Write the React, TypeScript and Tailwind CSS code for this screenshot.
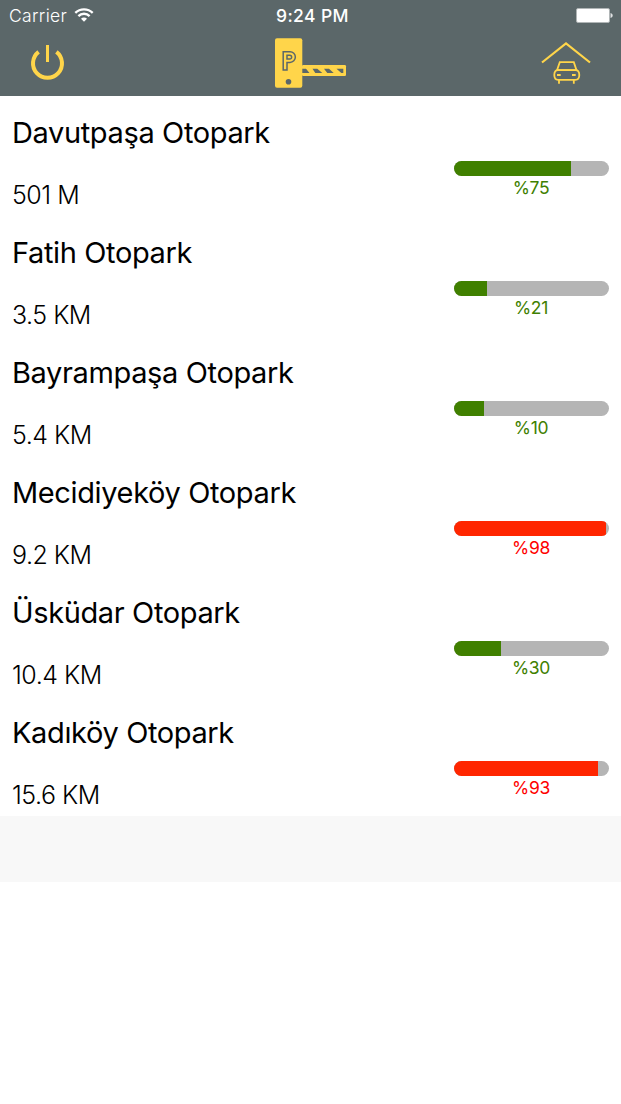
type Lot = { name: string; distance: string; percent: number; fill: number };

const lots: Lot[] = [
  { name: "Davutpaşa Otopark", distance: "501 M", percent: 75, fill: 117 },
  { name: "Fatih Otopark", distance: "3.5 KM", percent: 21, fill: 33 },
  { name: "Bayrampaşa Otopark", distance: "5.4 KM", percent: 10, fill: 30 },
  { name: "Mecidiyeköy Otopark", distance: "9.2 KM", percent: 98, fill: 152 },
  { name: "Üsküdar Otopark", distance: "10.4 KM", percent: 30, fill: 47 },
  { name: "Kadıköy Otopark", distance: "15.6 KM", percent: 93, fill: 144 },
];

function WifiIcon() {
  return (
    <svg className="-mt-[3px] ml-[7px] h-[14px] w-[20px]" viewBox="0 0 20 14" fill="none" stroke="#fff" strokeWidth="2.3">
      <path d="M1.3 4.9a12.3 12.3 0 0 1 17.4 0" />
      <path d="M4.4 8.1a7.9 7.9 0 0 1 11.2 0" />
      <path d="M7 10.7a4.2 4.2 0 0 1 6 0L10 13.7z" fill="#fff" stroke="none" />
    </svg>
  );
}

function BatteryIcon() {
  return (
    <svg className="-mt-[3px] h-[15px] w-[37px]" viewBox="0 0 37 15">
      <rect x="0.5" y="0.5" width="33" height="14" rx="1.5" fill="#fff" stroke="#b0b5b6" />
      <path d="M34.5 5c1.5.4 2.2 1.3 2.2 2.5s-.7 2.1-2.2 2.5z" fill="#dfe1e2" />
    </svg>
  );
}

function PowerIcon() {
  return (
    <svg className="h-9 w-[35px]" viewBox="0 0 35 36" fill="none" stroke="#ffd54a">
      <path d="M8.6 6.9A14.5 14.5 0 1 0 26.4 6.9" strokeWidth="4" />
      <path d="M17.5 0v17" strokeWidth="3" />
    </svg>
  );
}

function BarrierIcon() {
  return (
    <svg className="h-[50px] w-[72px]" viewBox="0 0 72 50">
      <rect x="0" y="0.3" width="27.3" height="49.5" rx="2" fill="#ffd54a" />
      <path
        d="M8.2 13.7H15a5.3 5.3 0 0 1 0 10.7H12V32H8.2zM12 17.3v3.7h2.8a1.8 1.8 0 0 0 0-3.7z"
        fill="none"
        stroke="#5b6769"
        strokeWidth="1.5"
      />
      <circle cx="13.5" cy="43.7" r="2.8" fill="#5b6769" />
      <rect x="27" y="27" width="44" height="11" rx="1.3" fill="#ffd54a" />
      <path
        d="M27.3 30.7H31l3.5 4.3h-7.2zM37.5 30.7h4.8l5 4.3h-7zM49 30.7h5l4.7 4.3h-6.4zM61.5 30.7h6.8V35h-2z"
        fill="#5b6769"
      />
    </svg>
  );
}

function GarageIcon() {
  return (
    <svg className="h-[43px] w-[50px]" viewBox="0 0 50 43" fill="none" stroke="#ffd54a" strokeWidth="2.2">
      <path d="M1 20.5L25 1.500l24 19" />
      <path d="M16 28.2l2.8-8h14l2.7 8z" strokeWidth="1.8" />
      <path d="M17 28.2h17.5c2.5 0 3.8 2.2 3.8 4.8s-1.3 4.8-3.8 4.8H17c-2.5 0-3.7-2.2-3.7-4.8s1.200-4.800 3.700-4.800z" strokeWidth="1.8" />
      <path d="M16 33h3.7M31 33h3.7M18 38v3.8M32.8 38v3.8" strokeWidth="1.8" />
    </svg>
  );
}

function LotRow({ lot }: { lot: Lot }) {
  const full = lot.percent > 90;
  return (
    <li className="flex h-[120px] justify-between pr-3 pl-3">
      <div className="flex flex-col whitespace-nowrap">
        <h2 className="mt-[17px] h-10 text-[29px] leading-10 tracking-[-0.37px]">{lot.name}</h2>
        <p className="mt-[26px] h-8 text-[25px] leading-8 font-light tracking-[-0.5px]">{lot.distance}</p>
      </div>
      <div className="w-[155px] pt-[65px]">
        <div className="h-[15px] overflow-hidden rounded-full bg-[#b5b5b5]">
          <div className={full ? "h-full bg-[#ff2600]" : "h-full bg-[#408000]"} style={{ width: lot.fill }} />
        </div>
        <p className={`h-6 pr-px text-center text-[17.5px] leading-6 tracking-[-0.3px] ${full ? "text-[#ff0000]" : "text-[#408000]"}`}>
          %{lot.percent}
        </p>
      </div>
    </li>
  );
}

export default function App() {
  return (
    <main className="h-[1104px] w-[621px] overflow-hidden bg-white font-['Inter','Liberation_Sans',sans-serif] text-black">
      <header className="h-24 bg-[#5b6769]">
        <div className="grid h-[33px] grid-cols-3 items-center pr-2 pl-[9px] text-white">
          <div className="flex items-center text-[17.5px] font-[350] tracking-[0.35px]">
            Carrier
            <WifiIcon />
          </div>
          <div className="pl-[3px] text-center text-[17.5px] font-medium tracking-[0.4px]">9:24 PM</div>
          <div className="flex justify-end">
            <BatteryIcon />
          </div>
        </div>
        <nav className="flex h-[63px] items-start justify-between pr-[30px] pl-[30px]">
          <button className="mt-3" aria-label="Power"><PowerIcon /></button>
          <div className="mt-[5px] ml-[15px]"><BarrierIcon /></div>
          <button className="mt-[9px]" aria-label="Garage"><GarageIcon /></button>
        </nav>
      </header>
      <ul>
        {lots.map((lot) => (
          <LotRow key={lot.name} lot={lot} />
        ))}
      </ul>
      <div className="h-[66px] bg-[#f8f8f8]" />
    </main>
  );
}
